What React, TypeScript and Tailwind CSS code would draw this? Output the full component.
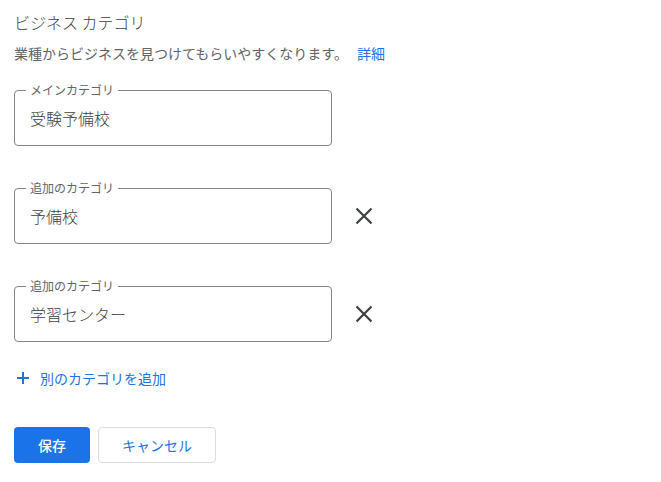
import React from "react";

function Field({ label, value, removable }: { label: string; value: string; removable?: boolean }) {
  return (
    <div className="flex items-center">
      <div className="relative w-[318px] h-[56px] border border-[#80868b] rounded-[4px] flex items-center pl-[15px]">
        <span className="absolute left-[11px] -top-[9px] px-[4px] bg-white text-[12px] leading-[16px] text-[#5f6368]">
          {label}
        </span>
        <span className="text-[16px] leading-[24px] text-[#3c4043] font-light">{value}</span>
      </div>
      {removable && (
        <button className="ml-[12px] w-10 h-10 flex items-center justify-center">
          <svg width="18" height="18" viewBox="0 0 18 18">
            <path d="M1.5 1.5 L16.5 16.5 M16.5 1.5 L1.5 16.5" stroke="#3c4043" strokeWidth="2.2" fill="none" />
          </svg>
        </button>
      )}
    </div>
  );
}

export default function App() {
  return (
    <div className="bg-white w-[661px] h-[482px] pl-[14px] pt-[12px] font-['Noto_Sans_CJK_JP',sans-serif]">
      <div className="text-[16px] leading-[20px] text-[#3c4043] font-light">ビジネス カテゴリ</div>
      <div className="mt-[11px] text-[14px] leading-[20px] text-[#5f6368]">
        業種からビジネスを見つけてもらいやすくなります。
        <span className="ml-[9px] text-[#1a73e8]">詳細</span>
      </div>
      <div className="mt-[27px] flex flex-col gap-[42px]">
        <Field label="メインカテゴリ" value="受験予備校" />
        <Field label="追加のカテゴリ" value="予備校" removable />
        <Field label="追加のカテゴリ" value="学習センター" removable />
      </div>
      <div className="mt-[26px] flex items-center h-[20px] text-[14px] text-[#1a73e8]">
        <svg width="12" height="12" viewBox="0 0 12 12" className="ml-[3px]">
          <path d="M6 0 V12 M0 6 H12" stroke="#1a73e8" strokeWidth="2" fill="none" />
        </svg>
        <span className="ml-[11px] leading-[20px]">別のカテゴリを追加</span>
      </div>
      <div className="mt-[39px] flex gap-[8px]">
        <button className="h-[36px] px-6 rounded-[4px] bg-[#1a73e8] text-white text-[14px] font-medium">保存</button>
        <button className="h-[36px] w-[118px] rounded-[4px] border border-[#dadce0] bg-white text-[#1a73e8] text-[14px] font-normal">キャンセル</button>
      </div>
    </div>
  );
}
